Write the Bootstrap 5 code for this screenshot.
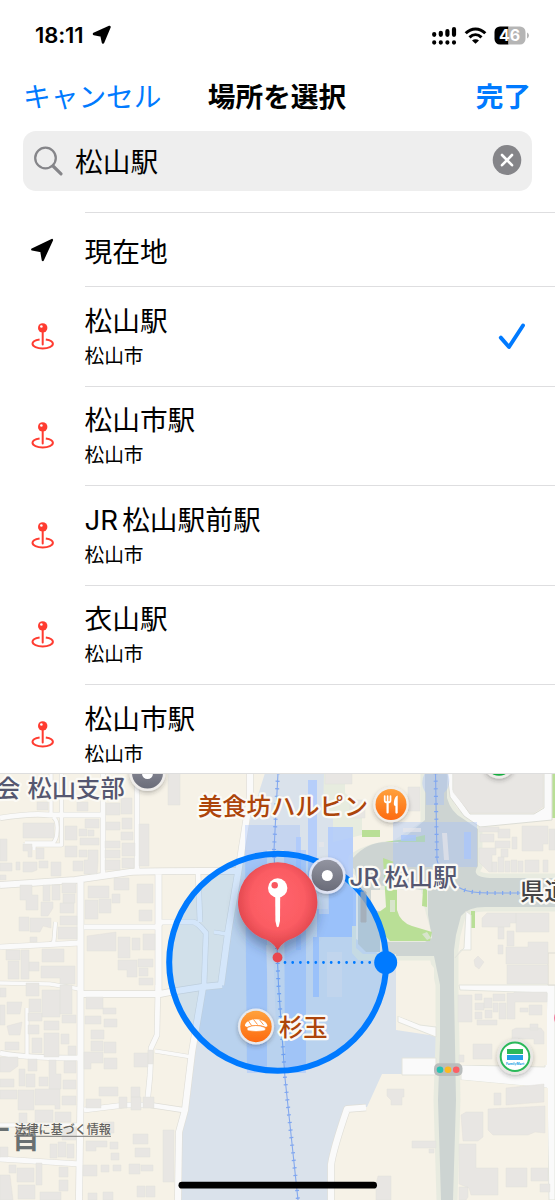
<!DOCTYPE html>
<html lang="ja">
<head>
  <meta charset="UTF-8">
  <meta name="viewport" content="width=device-width, initial-scale=1">
  <title>場所を選択</title>
  <link href="https://cdn.jsdelivr.net/npm/bootstrap@5.3.0/dist/css/bootstrap.min.css" rel="stylesheet">
  <style>
    body { width: 555px; height: 1200px; overflow: hidden; background: #fff; color: #000; font-family: Inter, "Noto Sans CJK JP", sans-serif; font-size: 27.7px; line-height: 1.2; }
    svg { display: block; flex-shrink: 0; }
    .status-bar { height: 71px; padding: 0 25px 0 35px; }
    .clock { font-size: 22px; font-weight: 600; letter-spacing: -.1px; }
    .status-icons { gap: 7px; }
    .title-bar { height: 54px; padding: 0 23px 0 22px; }
    .title-bar button { color: #007aff; font-size: inherit; line-height: 1; }
    .title-bar > * { flex: 1 1 0; }
    .search-box { height: 60px; margin: 6px 23px 0; padding: 0 10px 0 11px; border-radius: 13px; background: #eee; }
    .search-box input { font-size: inherit; color: #000; outline: none; margin-left: 11px; padding-top: 3px !important; }
    .places { height: 561px; margin-top: 21px; overflow: hidden; }
    .place-icon { width: 84.5px; padding: 2px 0 0 31px; }
    .place-row { height: 99.5px; }
    .place-row.current { height: 74px; }
    .place-row.current .place-name { padding-top: 4px; }
    .place-body { border-top: 1px solid #dedee0; padding-right: 28px; }
    .place-name { line-height: 34px; white-space: nowrap; }
    .place-sub { font-size: 19.7px; line-height: 26px; margin-top: 5px; }
    .map-pane { height: 427px; border-top: 1px solid #dedede; }

    .land { fill: #f6f2e7; }
    .yard { fill: #dae2eb; }
    .street-edge path, .street path { fill: none; stroke-linejoin: round; }
    .street-edge path { stroke: #dfded7; stroke-width: calc(var(--w) + 1.2px); }
    .street path { stroke: #fafafa; stroke-width: var(--w); }
    .w3 { --w: 3.4px; } .w5 { --w: 4.8px; } .w6 { --w: 6.2px; }
    .house { fill: #e8e6e3; stroke: #e0deda; stroke-width: .4; }
    .green { fill: #b9df96; }
    .rail { fill: none; stroke: #85a9ee; stroke-width: 1.1; }
    .tie { fill: none; stroke: #7fa6f1; stroke-width: 4; stroke-dasharray: 1.2 6.4; }
    .map-label { font-size: 24.3px; font-weight: 500; stroke: #fbfaf5; stroke-width: 4.5px; stroke-linejoin: round; paint-order: stroke; }
    .food { fill: #ad450b; }
    .poi { fill: #555770; }
  </style>
</head>
<body class="d-flex flex-column">

  <header class="status-bar d-flex align-items-center justify-content-between">
    <div class="d-flex align-items-center">
      <span class="clock">18:11</span>
      <svg class="ms-2" width="21" height="20" viewBox="0 0 21 20"><path d="M17.500 2 11 17.500 9.500 10.400 2 9Z" stroke="#000" stroke-width="2.500" stroke-linejoin="round"/></svg>
    </div>
    <div class="status-icons d-flex align-items-center">
      <svg width="25" height="20" viewBox="0 0 25 20" stroke="#000" stroke-width="4.200" stroke-linecap="round">
        <path d="M2.200 8v.8M8.800 6.800v2M15.400 5.200v3.600M22 3.200v5.600M2.200 16.400v.2M8.800 16.400v.2M15.400 16.400v.2M22 16.400v.2"/>
      </svg>
      <svg width="23" height="18" viewBox="0 0 22 18" fill="none" stroke="#000" stroke-width="3">
        <path d="M1.200 6.300C7 .4 15 .4 20.800 6.300M5 10.300c3.600-3.500 8.400-3.500 12 0"/><path d="M11 16.800 7.500 13.500c2-1.800 5-1.800 7 0Z" fill="#000" stroke="none"/>
      </svg>
      <svg width="36" height="19" viewBox="0 0 36 19">
        <path d="M6 .5h8.500v18H6a5.500 5.500 0 0 1-5.500-5.500V6A5.500 5.500 0 0 1 6 .5Z"/>
        <path d="M14.500 .5H26A5.500 5.500 0 0 1 31.500 6v7a5.500 5.500 0 0 1-5.500 5.500H14.500Z" fill="#b5b5b5"/>
        <path d="M33 6.500q2 1 2 3t-2 3Z" fill="#b5b5b5"/>
        <text x="15.600" y="15.400" text-anchor="middle" fill="#fff" font-size="16" font-weight="700">46</text>
      </svg>
    </div>
  </header>

  <nav class="title-bar d-flex align-items-center">
    <button class="btn btn-link text-decoration-none text-start text-nowrap p-0">キャンセル</button>
    <div class="fw-bold text-center text-nowrap">場所を選択</div>
    <button class="btn btn-link text-decoration-none text-end fw-bold p-0">完了</button>
  </nav>

  <div class="search-box d-flex align-items-center">
    <svg width="30" height="32" viewBox="0 0 30 32" fill="none" stroke="#858589"><circle cx="11.500" cy="13" r="10.300" stroke-width="2.300"/><path d="m19 21 8 7.800" stroke-width="3.200" stroke-linecap="round"/></svg>
    <input class="form-control border-0 bg-transparent shadow-none p-0" type="text" value="松山駅" aria-label="検索">
    <svg width="30" height="32" viewBox="0 0 30 32"><ellipse cx="15" cy="15" rx="14.300" ry="15" fill="#858589"/><path d="m10 10 10 10.200M20 10 10 20.200" stroke="#fff" stroke-width="2.600" stroke-linecap="round"/></svg>
  </div>

  <svg width="0" height="0" class="position-absolute">
    <symbol id="pin" viewBox="0 0 24 28">
      <circle cx="11.700" cy="4.900" r="4.700" fill="#ff3b30"/><circle cx="10.400" cy="3.500" r="1.300" fill="#fff"/>
      <path d="M11.700 9v12.500" stroke="#ff3b30" stroke-width="2" stroke-linecap="round"/>
      <path d="M8.600 16.400C4.500 17 1.500 18.700 1.500 20.800c0 2.700 4.600 4.600 10.200 4.600s10.200-1.900 10.200-4.600c0-2.100-3-3.800-7.100-4.400" fill="none" stroke="#ff3b30" stroke-width="2"/>
    </symbol>
  </svg>

  <main class="places">
    <div class="place-row current d-flex">
      <div class="place-icon d-flex align-items-center flex-shrink-0">
        <svg width="23" height="25" viewBox="0 0 23 25"><path d="M21 2 11.800 22 10.300 13.200 1.200 11.500Z" stroke="#000" stroke-width="2.200" stroke-linejoin="round"/></svg>
      </div>
      <div class="place-body flex-grow-1 d-flex align-items-center"><div class="place-name">現在地</div></div>
    </div>
    <div class="place-row d-flex">
      <div class="place-icon d-flex align-items-center flex-shrink-0"><svg width="24" height="28"><use href="#pin"/></svg></div>
      <div class="place-body flex-grow-1 d-flex align-items-center justify-content-between">
        <div><div class="place-name">松山駅</div><div class="place-sub">松山市</div></div>
        <svg width="30" height="30" viewBox="0 0 30 30"><path d="M3.800 16.600 12 26 26 4.500" fill="none" stroke="#007aff" stroke-width="3.900" stroke-linecap="round" stroke-linejoin="round"/></svg>
      </div>
    </div>
    <div class="place-row d-flex">
      <div class="place-icon d-flex align-items-center flex-shrink-0"><svg width="24" height="28"><use href="#pin"/></svg></div>
      <div class="place-body flex-grow-1 d-flex align-items-center">
        <div><div class="place-name">松山市駅</div><div class="place-sub">松山市</div></div>
      </div>
    </div>
    <div class="place-row d-flex">
      <div class="place-icon d-flex align-items-center flex-shrink-0"><svg width="24" height="28"><use href="#pin"/></svg></div>
      <div class="place-body flex-grow-1 d-flex align-items-center">
        <div><div class="place-name"><span class="me-1">JR</span>松山駅前駅</div><div class="place-sub">松山市</div></div>
      </div>
    </div>
    <div class="place-row d-flex">
      <div class="place-icon d-flex align-items-center flex-shrink-0"><svg width="24" height="28"><use href="#pin"/></svg></div>
      <div class="place-body flex-grow-1 d-flex align-items-center">
        <div><div class="place-name">衣山駅</div><div class="place-sub">松山市</div></div>
      </div>
    </div>
    <div class="place-row d-flex">
      <div class="place-icon d-flex align-items-center flex-shrink-0"><svg width="24" height="28"><use href="#pin"/></svg></div>
      <div class="place-body flex-grow-1 d-flex align-items-center">
        <div><div class="place-name">松山市駅</div><div class="place-sub">松山市</div></div>
      </div>
    </div>
  </main>

  <section class="map-pane">
    <svg width="555" height="426" viewBox="0 774 555 426">
      <defs>
        <linearGradient id="orange" x2="0" y2="1"><stop stop-color="#ffa13c"/><stop offset="1" stop-color="#fd6a10"/></linearGradient>
        <linearGradient id="slate" x2="0" y2="1"><stop stop-color="#9294a0"/><stop offset="1" stop-color="#6a6c79"/></linearGradient>
        <radialGradient id="balloon" cx=".5" cy=".42" r=".62"><stop stop-color="#ff646c"/><stop offset=".55" stop-color="#fb5c63"/><stop offset="1" stop-color="#d23c42"/></radialGradient>
        <filter id="shade" x="-40%" y="-40%" width="180%" height="180%"><feDropShadow dx="0" dy="2" stdDeviation="2" flood-color="#333" flood-opacity=".3"/></filter>
        <filter id="deep" x="-40%" y="-40%" width="180%" height="180%"><feDropShadow dx="0" dy="8" stdDeviation="6" flood-color="#234" flood-opacity=".4"/></filter>
        <g id="streets">
          <g class="w3">
            <path d="M51 773V814M61.500 773V845H23M34 845v5M53 817q5 3 4 14 0 8-4 12H25"/>
            <path d="M27 1008V1057M55.500 922 54 940q0 4-5 4M0 983l50 1 30 5M155 1051l37 6M0 1125H80M214 932l13 2"/>
          </g>
          <g class="w5">
            <path d="M0 818Q30 813 50 815H103M103 773V874M137 773V873M0 947 80 943M0 1053Q25 1058 80 1058M0 1159 80 1164M84 1110 125 1105H150L183 1110"/>
            <path d="M158 985 157 1035 151 1048 150 1075 147 1106M84 927H156L162 922H193Q197 922 206 933L204 986M198 871 200 922"/>
          </g>
          <g class="w6">
            <path d="M0 885 75 880 130 872Q140 871 200 871H238M80.500 880V1100L79 1200M158.500 871V993M82 994H160L170 992 202 987 222 985M250 773V797L238 873 228 933 221 985"/>
            <path d="M203 987 192 1052 185 1110 179 1132 178 1200M331 1200V1165Q333 1150 347 1109L366 1107.500"/>
          </g>
        </g>
      </defs>

      <rect class="land" y="773" width="555" height="427"/>
      <path class="yard" d="M265 773H340L353 830V937L396 965V1030L436 1036V1074H382L367 1107 345 1110 332 1145 328 1165V1200H180V1150L185 1110 192 1052 202 988 222 985 229 933 240 870 247 830Z"/>
      <path fill="#e7ecdf" d="M324 773H345V793L362 808V835L333 842V812H323Z"/>

      <!-- main avenues with their pavements -->
      <path fill="#cdd4d2" stroke="#e8ebe0" stroke-width="9" stroke-linejoin="round" paint-order="stroke" d="M425 773H447V798Q451 812 462 818L478 829V866Q470 877 490 878H555V907H485Q468 907 461 916L456 935 454 950V990L456 1100 453 1200H441L438 1100 440 1040V985L434 956H386V942H425L432 938 428 915V890L375 885 353 868V858Q370 846 395 845L425 825Z"/>
      <path fill="#cdd4d2" d="M353 858Q370 838 398 843L425 820V890L380 885V952H366L358 944V890Z"/>
      <path fill="#f4f0e7" d="M371 890H386V912L371 910ZM397 890H421L424 906 431 932 402 923Q397 917 398 907Z"/>
      <path class="green" d="M383 858 394 862Q382 868 386 876L397 890V910Q400 922 412 926L432 932 430 941H390Q380 932 375 915L386 907ZM423 889H427V907L422 906ZM362 830H380V837H362ZM471 911H475V928H471ZM385 842H425V835L412 838ZM550 773H555V818H552Z"/>

      <g id="lanes"></g>

      <path fill="#fafafa" stroke="#dcddd6" stroke-width="1" d="M447 773H453V790L470 814H534L544 808V773H552V820L480 827 464 816 450 797Z"/>
      <path fill="#fafafa" stroke="#e3e4dc" stroke-width="1" d="M398 1016 420 1025 436 1027V1037L398 1022ZM402 1058H436V1075H402ZM459 985H555V1200H549L547 1088 461 1080V1065L545 1067 547 993 460 990ZM455 958 461 950H471V915L466 911 464 948Z"/>
      <path class="land" d="M398 962H429L434 968V1018L436 1026 420 1024 398 1016ZM461 992H547V1065H461ZM461 1080 548 1088V1200H460Z"/>
      <path fill="#f6f2e7" stroke="#dddcd4" d="M548 953H560V985H548Z"/>

      <path class="house" d="M23 823h31v15H23zM0 839h7v22H0zM65 826h12v14H65zM79 829h8v7h-8zM85 819h14v9H85zM88 830h6v6h-6zM80 838h19v7H80zM65 846h12v11H65zM79 850h8v7h-8zM88 850h10v12l-1 12H84V860h4zM73 861h10v10H73zM0 863h12v8H0zM16 862h4v8h-4zM23 862h14v8l-5 2h-9zM39 861h9v7h-9zM51 862h10v14H51zM23 844h9v13h-4v-6h-5zM36 848h8v11h-8zM0 875h6v5H0zM106 803h14v12h-14zM121 798h11v16h-11zM106 822h14v8h-14zM122 818h10v11h-10zM121 832h12v8h-12zM105 841h15v7h-15zM105 850h15v8h-15zM122 843h13v13h-13zM105 860h15v10h-15zM122 858h12v10h-12zM168 773h12v32h-12zM139 824h10v42h-10zM37 802h11v8H37zM77 802h11v9H77zM106 780h14v12h-14z"/>
      <path class="house" d="M20 885h12v10h6v15H26v-10h-6zM43 885h7v16h-7zM52 885h8v15h-8zM62 883h14v10H62zM63 894h12v9H63zM60 903h14v10H60zM41 902h12v6l-5 8h-7zM19 917h10v14H19zM30 918h21v10l-8-2-3 6H30zM30 937h7v5h-7zM60 916h17v9H60zM58 927h19v12H58zM88 886h21v12H88zM114 878h15v12h-15zM112 894h8v9h-8zM99 899h12v14H99zM85 900h13v19H85zM137 884h16v19h-16zM139 910h13v11h-13zM87 936l29-4v19H87zM118 937h12v21h-12zM132 938h8v12h-8zM143 934h12v16h-12zM118 960h19v17h-10v-7h-9zM138 959h15v8h-15zM139 968h9v8h-9zM139 978h14v7h-14zM42 949h22v13H42zM41 966h34v18H60v-6H41zM6 950h14v10H6zM8 961h11v18H8zM21 950h8v29h-8zM29 962h10v9H29z"/>
      <path class="house" d="M0 988h6v9H0zM7 1002h15l-2 12H7zM0 1005h5v20H0zM7 1026l15-4-2 13H9zM5 1042h14v8H5zM26 983h13v13H26zM29 999h12v13H29zM42 990h18v27H42zM60 985h12v29H60zM28 1013h14v8H28zM62 1015h14v8H62zM44 1021h15v9H44zM28 1025h11v9H28zM32 1038h10v15H32zM44 1033h15v24H44zM61 1034h8v10h-8zM68 1046h8v9h-8zM0 1057h18v9l-8 6H0zM19 1069h6v17h-6zM26 1074h9v13h-9zM28 1059h9v12h-9zM39 1077h9v9h-9zM49 1060h7v14h5v15H49zM64 1061h12v12H64zM63 1080h13v9H63zM0 1079h14v8H0zM0 1090h17v9H0zM18 1090h16v20H18zM35 1089h25v20h-5v-4H35zM62 1096h14v9H62zM19 1113h8v10h-8zM35 1110h18v12H35zM55 1112h16v10H55zM62 1128h14v12H62zM0 1147h8v10H0zM50 1144h7v14h-7zM58 1142h8v15h-8zM67 1144h7v14h-7zM9 1165h7v8H9zM17 1168h17v14H17zM36 1163h6v22h-6zM59 1167h9v10h-9zM59 1180h9v11h-9zM0 1175h10l3 25H0zM18 1185h17v14H18zM40 1192h21v8H40z"/>
      <path class="house" d="M86 997h17v12H86zM103 1008h13v6h-13zM85 1016h16v8H85zM104 1019h13v8h-13zM91 1030h13v9H91zM91 1041h12v10H91zM104 1042h12v11h-12zM84 1052h19v11H91v6h-7zM104 1058h13v11h-13zM134 1053h14v14h-14zM148 1050h5v14h-5zM99 1087h19v9H99zM131 1087h9v10h-9zM119 1097h8v11h-8zM131 1097h10v13h-10zM143 1097h11v11h-11zM86 1099h15v9H86zM102 1122h12v11h-12zM86 1141h21v6H96v4H86zM110 1142h8v7h-8zM111 1153h8v7h-8zM133 1134h15v10h-15zM135 1148h15v9h-15zM83 1165h14v11H83zM101 1165h8v7h-8zM113 1165h8v6h-8zM129 1164h11v10h-11zM141 1165h12v6h-12zM163 1130h11v52h-11zM137 1186h8v11h-8zM146 1186h9v11h-9zM88 1193h9v7h-9zM103 1192h10v8h-10z"/>
      <path class="house" d="M453 773H543V807L534 813H470L453 792ZM408 787h12v24h-12zM325 773h27v11h-27zM350 800h15v18h-15zM479 827h20v5h-20zM480 834h14v8h-14zM498 829h12v9h-12zM479 848h17v7h-4v17h-3l-10-10zM495 841h15v7h-15zM501 849h7v8h-7zM512 837h5v12h-5zM522 826h26v18h-5v7h-21zM492 862h5v10h-5zM498 857h6v15h-6zM505 861h5v11h-5zM511 860h6v12h-6zM518 861h5v11h-5zM525 860h14v12h-14zM549 829h6v21h-6zM543 860h5v12h-5zM482 918l5-5h29v10h-6v4h-28zM516 913h33v19h-33zM498 927h6v12h-6zM507 931h7v15h-7zM498 945h5v9h-5zM506 947h22v-5h20v22h-42zM507 965h41v19h-41zM474 960l4-4 6 6-5 7-4-3z"/>
      <path class="house" d="M458 995h14v27h-14zM475 994h7v6h-7zM475 1003h9v7h-9zM475 1012h7v7h-7zM484 998h8v10h-8zM485 1010h7v8h-7zM493 994h12v7h-12zM493 1003h5v9h-5zM499 1003h7v16h-7zM477 1020h20v5h-20zM507 993h7v-1h33v10h-32v17h-8zM520 1008h8v4h-8zM529 1005h13v10h-13zM530 1024h8v6h-8zM512 1030l4-2h25l3 4v12h-10v-5h-22zM473 1044h19v15h-19zM459 1055h5v7h-5zM506 1088l38-4v18l-38 3zM494 1093h7v12h-7zM488 1109l57-3v27l-10-1-7 3h-35l-5-5zM461 1115l5-3h17v25l-5 4h-15zM459 1144h17v24h22v27h-27l-2-7-10-4zM506 1168h21v19h-21zM531 1168h17v13h-17zM540 1184h10v8h-10zM459 1187h9v10l-2 3h-7zM412 1141h24v7h-24zM429 1149h5v4h-5zM387 1089h17v8h-2v8h-11v-5l-4-4zM378 1176h13v24h-15v-16z"/>

      <!-- station platforms and sidings -->
      <path fill="#a2bffb" opacity=".38" d="M245 825H300V850H245ZM425 773H448Q452 786 444 793V805H426V793Q419 784 425 773ZM393 822H477V867H393Z"/>
      <path fill="#a9c7ff" opacity=".75" d="M308 780H317V887H308ZM328 827H353V885H356V937H317V909H328ZM296 837H301V950H296ZM313 937H319V997H313Z"/>
      <path fill="#a5c5ff" opacity=".55" d="M245 850H267V1073H247ZM284 850H306V1073H285ZM285 940H292V1073H285ZM299 940H306V1057H299Z"/>
      <path fill="#aac5fa" opacity=".8" d="M401 835h15v6h-15zM464 832h7v27h-7z"/>
      <path fill="#e8e7ea" opacity=".65" d="M442 833h5l2 27h-5zM319 842h5v5h-5zM324 863h6v24h-6zM319 887h10v27h-10zM327 952h15v45h-15zM266 945h7l3 80h-7zM403 828h18v4h-18zM390 900h5v12h-5zM422 934l5-2 4 6-4 2z"/>
      <path fill="#e8ecdf" d="M352 926H356V948L363 954H396V960H358L352 953Z"/>
      <path class="rail" d="M278 773 274 850 277.500 960 278.500 985 285 1078 298 1200M435.500 773 437 860Q442 880 462 889 470 893 490 893H555"/>
      <path class="tie" d="M278 773 274 850 277.500 960 278.500 985 285 1078 298 1200M435.500 773 437 860Q442 880 462 889 470 893 490 893H555"/>

      <!-- selected radius -->
      <circle cx="277.700" cy="962.300" r="108.500" fill="#007aff" fill-opacity=".15" stroke="#007aff" stroke-width="6"/>
      <path d="M285 962.500H377" stroke="#007aff" stroke-width="2.800" stroke-linecap="round" stroke-dasharray="0 7.700"/>
      <circle cx="385.700" cy="962.500" r="11.500" fill="#007aff"/>
      <path d="m357 888 8.500 3.500M361 892v30h5v-30z" fill="#a2a9b2" stroke="#a2a9b2" opacity=".75"/>

      <text class="map-label poi" x="-4" y="796.500">会</text>
      <text class="map-label poi" x="27.500" y="796.500">松山支部</text>
      <g filter="url(#shade)"><circle cx="147.500" cy="773" r="18" fill="#efedeb"/><circle cx="147.500" cy="773" r="15.500" fill="url(#slate)"/><circle cx="147.500" cy="773.500" r="5.500" fill="#fff"/></g>
      <text class="map-label food" x="198" y="814.500">美食坊ハルピン</text>
      <g filter="url(#shade)"><circle cx="391" cy="804.500" r="17.800" fill="#f0eeea"/><circle cx="391" cy="804.500" r="15.500" fill="url(#orange)"/></g>
      <path d="M384.700 796V800.500Q384.700 802.500 387.600 802.500T390.500 800.500V796M387.600 796V802.500" fill="none" stroke="#fff" stroke-width="1.700" stroke-linecap="round"/>
      <path d="M387.600 802V812.500" stroke="#fff" stroke-width="2.200" stroke-linecap="round"/><path d="M397.700 795.500V813q-2 1.500-2.300-.5V806q-2-.3-1.500-3.500.5-6 3.800-7Z" fill="#fff"/>

      <g filter="url(#shade)"><circle cx="327.300" cy="875.500" r="18.300" fill="#e1e6f6"/><circle cx="327.300" cy="875.500" r="15.700" fill="url(#slate)"/></g>
      <circle cx="327.300" cy="875.500" r="5.500" fill="#fff"/>
      <text class="map-label poi" x="349.500" y="885.500">JR</text><text class="map-label poi" x="384.500" y="885.500">松山駅</text>
      <text class="map-label" x="520" y="900" fill="#444446" font-weight="700">県道</text>

      <g filter="url(#shade)"><circle cx="256" cy="1026.500" r="18" fill="#e6e9ef"/><circle cx="256" cy="1026.500" r="15.700" fill="url(#orange)"/></g>
      <path d="M245 1026q-.5-3 4-5.300 7-2.700 14 0 4 1.800 4.500 5.300l-1.500 1q-9-4-19 0Z" fill="#fff"/><path d="M248.500 1021l3 4.500M253.500 1019.500l4 5M259.500 1019.800l4 5" stroke="#fb8930" stroke-width=".9"/>
      <path d="M247.500 1027.500q8-4 17.500 0 1.500 2.300-1 3.300-8 1.500-15.500 0-2.500-1-1-3.300Z" fill="#fff" stroke="#fd8124" stroke-width=".6"/>
      <text class="map-label food" x="279" y="1036">杉玉</text>

      <!-- signal and shops -->
      <rect x="434" y="1063.200" width="28.500" height="12.800" rx="5" fill="#b9bdbd"/>
      <circle cx="440" cy="1069.700" r="3.300" fill="#26c2b2"/><circle cx="448" cy="1069.700" r="3.300" fill="#fcb922"/><circle cx="456.200" cy="1069.700" r="3.300" fill="#fb5f65"/>
      <g filter="url(#shade)"><circle cx="515" cy="1056.700" r="18" fill="#e9e7e4"/><circle cx="515" cy="1056.700" r="14.300" fill="#fff" stroke="#2bb95a" stroke-width="2"/></g>
      <path fill="#2bb95a" d="M507 1049h16v5h-16z"/><path fill="#259fe6" d="M507 1055h16v5h-16z"/>
      <text x="515" y="1065" text-anchor="middle" font-size="3.300" font-weight="700" fill="#259fe6">FamilyMart</text>
      <g filter="url(#shade)"><circle cx="499" cy="762" r="16.500" fill="#efedea"/><circle cx="499" cy="762" r="13.800" fill="#12ad40"/></g>
      <circle cx="563" cy="1018" r="9" fill="#f2799b"/>

      <!-- balloon -->
      <path filter="url(#deep)" fill="url(#balloon)" d="M277.700 862.200a39.700 39.700 0 0 1 39.700 39.700c0 17-11 31-26.500 37.200-7 2.700-10.500 6.500-13.200 11.400-2.700-4.900-6.200-8.700-13.200-11.400C249 933 238 919 238 901.900a39.700 39.700 0 0 1 39.700-39.700Z"/>
      <path d="M275.200 895h5l-.2 26-1.300 5.500q-1 1.300-2 0l-1.300-5.500Z" fill="#fff"/>
      <circle cx="277.700" cy="888" r="9.700" fill="#fff"/><circle cx="274.700" cy="885.200" r="3.200" fill="#f9575f"/>
      <circle cx="277.500" cy="957.500" r="4.900" fill="#e9474e"/>

      <text x="-17" y="1149" font-size="27" font-weight="700" fill="#697071">丁</text>
      <text x="12.500" y="1149" font-size="27" font-weight="700" fill="#697071">目</text>
      <text x="14.500" y="1134.300" font-size="12.050" font-weight="500" fill="#626260" stroke="#f6f2e7" stroke-width=".6" paint-order="stroke">法律に基づく情報</text>
      <path d="M14.500 1136.300H111" stroke="#777" stroke-width="1"/>
      <rect x="178.500" y="1181.800" width="198.500" height="6.800" rx="3.400"/>
    </svg>
  </section>

<script src="https://cdn.jsdelivr.net/npm/bootstrap@5.3.0/dist/js/bootstrap.bundle.min.js"></script>
<script>
  // lay the white carriageway over the grey street edges
  const lanes = document.getElementById('lanes');
  ['street-edge', 'street'].forEach(name => {
    const g = document.getElementById('streets').cloneNode(true);
    g.removeAttribute('id');
    g.setAttribute('class', name);
    lanes.appendChild(g);
  });
</script>

</body>
</html>
